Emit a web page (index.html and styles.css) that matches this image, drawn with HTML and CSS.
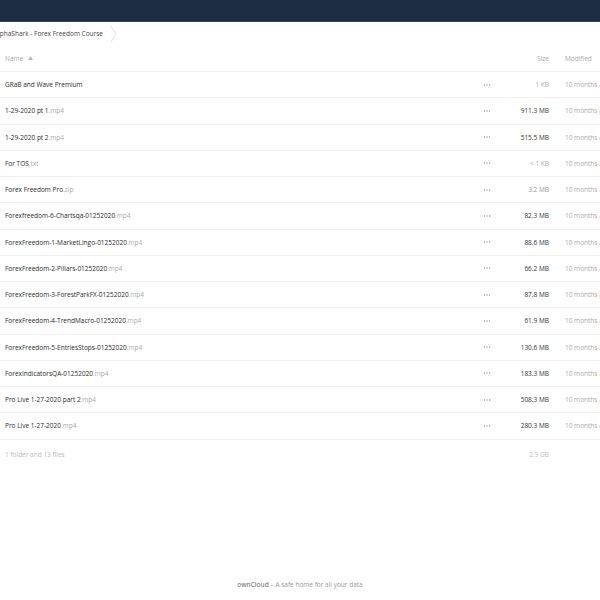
FILE: index.html
```html
<!DOCTYPE html>
<html lang="en">
<head>
  <meta charset="UTF-8">
  <title>Files - ownCloud</title>
  <link rel="stylesheet" href="styles.css">
</head>
<body>
  <div class="topbar"></div>

  <div class="crumbs">
    <span class="crumb">AlphaShark - Forex Freedom Course</span>
    <svg class="chevron" width="7" height="18" viewBox="0 0 7 18"><path d="M1 1 L6 9 L1 17" fill="none" stroke="#e2e2e2" stroke-width="1"/></svg>
  </div>

  <div class="files">
    <div class="row head">
      <div class="name">Name <svg class="sort" width="5" height="4" viewBox="0 0 5 4"><path d="M0 4 L2.5 0 L5 4 Z" fill="#bbb"/></svg></div>
      <div class="actions"></div>
      <div class="size">Size</div>
      <div class="modified">Modified</div>
    </div>

    <div class="row">
      <div class="name">GRaB and Wave Premium</div>
      <div class="actions"><span class="dots"></span></div>
      <div class="size light">1 KB</div>
      <div class="modified">10 months ago</div>
    </div>
    <div class="row">
      <div class="name">1-29-2020 pt 1<span class="ext">.mp4</span></div>
      <div class="actions"><span class="dots"></span></div>
      <div class="size">911.3 MB</div>
      <div class="modified">10 months ago</div>
    </div>
    <div class="row">
      <div class="name">1-29-2020 pt 2<span class="ext">.mp4</span></div>
      <div class="actions"><span class="dots"></span></div>
      <div class="size">515.5 MB</div>
      <div class="modified">10 months ago</div>
    </div>
    <div class="row">
      <div class="name">For TOS<span class="ext">.txt</span></div>
      <div class="actions"><span class="dots"></span></div>
      <div class="size light">&lt; 1 KB</div>
      <div class="modified">10 months ago</div>
    </div>
    <div class="row">
      <div class="name">Forex Freedom Pro<span class="ext">.zip</span></div>
      <div class="actions"><span class="dots"></span></div>
      <div class="size mid">3.2 MB</div>
      <div class="modified">10 months ago</div>
    </div>
    <div class="row">
      <div class="name">Forexfreedom-6-Chartsqa-01252020<span class="ext">.mp4</span></div>
      <div class="actions"><span class="dots"></span></div>
      <div class="size">82.3 MB</div>
      <div class="modified">10 months ago</div>
    </div>
    <div class="row">
      <div class="name">ForexFreedom-1-MarketLingo-01252020<span class="ext">.mp4</span></div>
      <div class="actions"><span class="dots"></span></div>
      <div class="size">88.6 MB</div>
      <div class="modified">10 months ago</div>
    </div>
    <div class="row">
      <div class="name">ForexFreedom-2-Pillars-01252020<span class="ext">.mp4</span></div>
      <div class="actions"><span class="dots"></span></div>
      <div class="size">66.2 MB</div>
      <div class="modified">10 months ago</div>
    </div>
    <div class="row">
      <div class="name">ForexFreedom-3-ForestParkFX-01252020<span class="ext">.mp4</span></div>
      <div class="actions"><span class="dots"></span></div>
      <div class="size">87.8 MB</div>
      <div class="modified">10 months ago</div>
    </div>
    <div class="row">
      <div class="name">ForexFreedom-4-TrendMacro-01252020<span class="ext">.mp4</span></div>
      <div class="actions"><span class="dots"></span></div>
      <div class="size">61.9 MB</div>
      <div class="modified">10 months ago</div>
    </div>
    <div class="row">
      <div class="name">ForexFreedom-5-EntriesStops-01252020<span class="ext">.mp4</span></div>
      <div class="actions"><span class="dots"></span></div>
      <div class="size">130.6 MB</div>
      <div class="modified">10 months ago</div>
    </div>
    <div class="row">
      <div class="name">ForexIndicatorsQA-01252020<span class="ext">.mp4</span></div>
      <div class="actions"><span class="dots"></span></div>
      <div class="size">183.3 MB</div>
      <div class="modified">10 months ago</div>
    </div>
    <div class="row">
      <div class="name">Pro Live 1-27-2020 part 2<span class="ext">.mp4</span></div>
      <div class="actions"><span class="dots"></span></div>
      <div class="size">508.3 MB</div>
      <div class="modified">10 months ago</div>
    </div>
    <div class="row">
      <div class="name">Pro Live 1-27-2020<span class="ext">.mp4</span></div>
      <div class="actions"><span class="dots"></span></div>
      <div class="size">280.3 MB</div>
      <div class="modified">10 months ago</div>
    </div>

    <div class="row summary">
      <div class="name">1 folder and 13 files</div>
      <div class="actions"></div>
      <div class="size">2.9 GB</div>
      <div class="modified"></div>
    </div>
  </div>

  <div class="footer"><b>ownCloud</b> – A safe home for all your data</div>
</body>
</html>
```

FILE: styles.css
```css
html, body {
  margin: 0;
  overflow: hidden;
}
body {
  font-family: "Open Sans", "Liberation Sans", sans-serif;
  font-size: 6.5px;
  color: #2a2a2a;
  background: #fff;
  min-height: 100vh;
  display: flex;
  flex-direction: column;
}
.topbar {
  height: 21px;
  background: #1d2d44;
  border-bottom: 1px solid #33435a;
}
.crumbs {
  height: 23px;
  display: flex;
  align-items: center;
}
.crumb {
  margin-left: -6px;
  color: #444;
}
.chevron {
  margin-left: 7px;
}
.row {
  display: grid;
  grid-template-columns: 1fr 25px 50px 51px;
  align-items: center;
  height: 26.25px;
  border-bottom: 1px solid #f2f2f2;
  box-sizing: border-box;
  white-space: nowrap;
}
.row.head {
  height: 27px;
  color: #aaa;
}
.name {
  padding-left: 5px;
}
.ext {
  color: #aaa;
}
.actions {
  display: flex;
  justify-content: center;
}
.dots {
  width: 8px;
  height: 2px;
  background: radial-gradient(circle, #aaa 0.8px, transparent 1px) 0 0 / 2.7px 2px repeat-x;
}
.sort {
  margin-left: 3px;
  vertical-align: 1px;
}
.size {
  text-align: right;
  color: #333;
}
.size.light {
  color: #aaa;
}
.size.mid {
  color: #999;
}
.row.head .size {
  color: #aaa;
}
.modified {
  padding-left: 16px;
  color: #aaa;
}
.row.summary {
  height: 29px;
  border-bottom: none;
  color: #bbb;
}
.row.summary .size {
  color: #bbb;
}
.footer {
  margin-top: auto;
  padding-bottom: 11px;
  text-align: center;
  color: #999;
}
.footer b {
  font-weight: 600;
  color: #888;
}
```
